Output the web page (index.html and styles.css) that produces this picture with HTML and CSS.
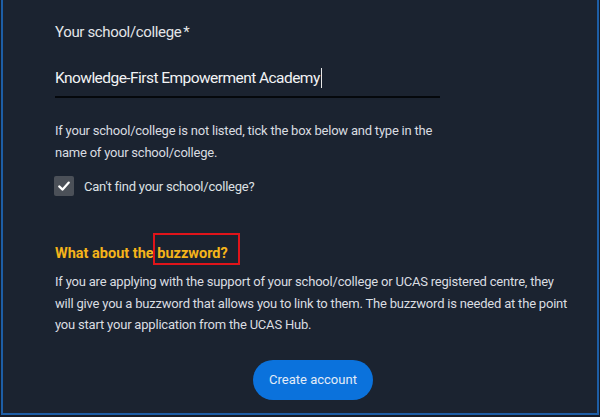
FILE: index.html
```html
<!DOCTYPE html>
<html lang="en">
<head>
<meta charset="utf-8">
<title>Your school/college</title>
<link rel="stylesheet" href="styles.css">
</head>
<body>
<div class="frame">
  <main class="form">
    <label class="field-label" for="school">Your school/college<span class="req">*</span></label>
    <div class="input-row">
      <span class="input-text">Knowledge-First Empowerment Academy</span><span class="caret"></span>
    </div>
    <p class="hint">If your school/college is not listed, tick the box below and type in the<br>name of your school/college.</p>
    <div class="check-row">
      <span class="checkbox">
        <svg viewBox="0 0 20 20" width="20" height="20"><path d="M5.2 10.4 L8.6 13.6 L14.8 6.6" fill="none" stroke="#ffffff" stroke-width="2.2" stroke-linecap="round" stroke-linejoin="round"/></svg>
      </span>
      <span class="check-label">Can't find your school/college?</span>
    </div>
    <h2 class="buzz-title">What about the <span class="highlight">buzzword?<span class="annot"></span></span></h2>
    <p class="buzz-text">If you are applying with the support of your school/college or UCAS registered centre, they<br>will give you a buzzword that allows you to link to them. The buzzword is needed at the point<br>you start your application from the UCAS Hub.</p>
    <div class="actions">
      <button class="btn" type="button">Create account</button>
    </div>
  </main>
</div>
</body>
</html>
```

FILE: styles.css
```css
html, body {
  margin: 0;
  padding: 0;
  background: #151c27;
}
body {
  width: 600px;
  height: 417px;
  overflow: hidden;
  font-family: Roboto, "Liberation Sans", sans-serif;
}
.frame {
  box-sizing: border-box;
  margin: 0 1px;
  height: 415px;
  background: #1b2330;
  border-left: 2px solid #1d5ea6;
  border-right: 2px solid #1d5ea6;
  border-bottom: 2px solid #1d5ea6;
  padding: 22px 0 0 52px;
}
.form {
  width: 516px;
  display: flex;
  flex-direction: column;
}
.field-label {
  color: #e4e6e9;
  font-size: 15px;
  line-height: 20px;
  letter-spacing: -0.35px;
  display: block;
}
.req {
  margin-left: 2px;
}
.input-row {
  margin-top: 26px;
  width: 385px;
  height: 28px;
  border-bottom: 2px solid #05080c;
  display: flex;
  align-items: flex-start;
}
.input-text {
  color: #f2f3f5;
  font-size: 15.5px;
  line-height: 20px;
  letter-spacing: -0.55px;
  white-space: nowrap;
}
.caret {
  display: inline-block;
  width: 1px;
  height: 20px;
  background: #e8e8e8;
  margin-left: 1px;
}
.hint {
  margin: 22px 0 0;
  color: #d9dce0;
  font-size: 13px;
  line-height: 22px;
  letter-spacing: -0.22px;
  white-space: nowrap;
}
.check-row {
  margin-top: 12px;
  display: flex;
  align-items: center;
  gap: 10px;
}
.checkbox {
  width: 20px;
  height: 20px;
  margin-left: -1px;
  border-radius: 2px;
  background: #4b5058;
  display: flex;
}
.check-label {
  color: #dde0e4;
  font-size: 13px;
  letter-spacing: -0.22px;
}
.buzz-title {
  margin: 48px 0 0;
  color: #f5b41a;
  font-size: 14.5px;
  font-weight: 700;
  line-height: 20px;
}
.highlight {
  position: relative;
}
.annot {
  position: absolute;
  left: -4px;
  right: -12px;
  top: -12px;
  bottom: -3px;
  border: 2px solid #e0141a;
}
.buzz-text {
  margin: 7px 0 0;
  color: #dadde1;
  font-size: 13px;
  line-height: 21.5px;
  letter-spacing: -0.2px;
  white-space: nowrap;
}
.actions {
  margin-top: 24px;
  display: flex;
  justify-content: center;
}
.btn {
  width: 120px;
  height: 40px;
  border: 0;
  border-radius: 20px;
  background: #0b72dc;
  color: #e3ecf7;
  font-family: Roboto, "Liberation Sans", sans-serif;
  font-size: 13px;
  padding: 0;
}
```
